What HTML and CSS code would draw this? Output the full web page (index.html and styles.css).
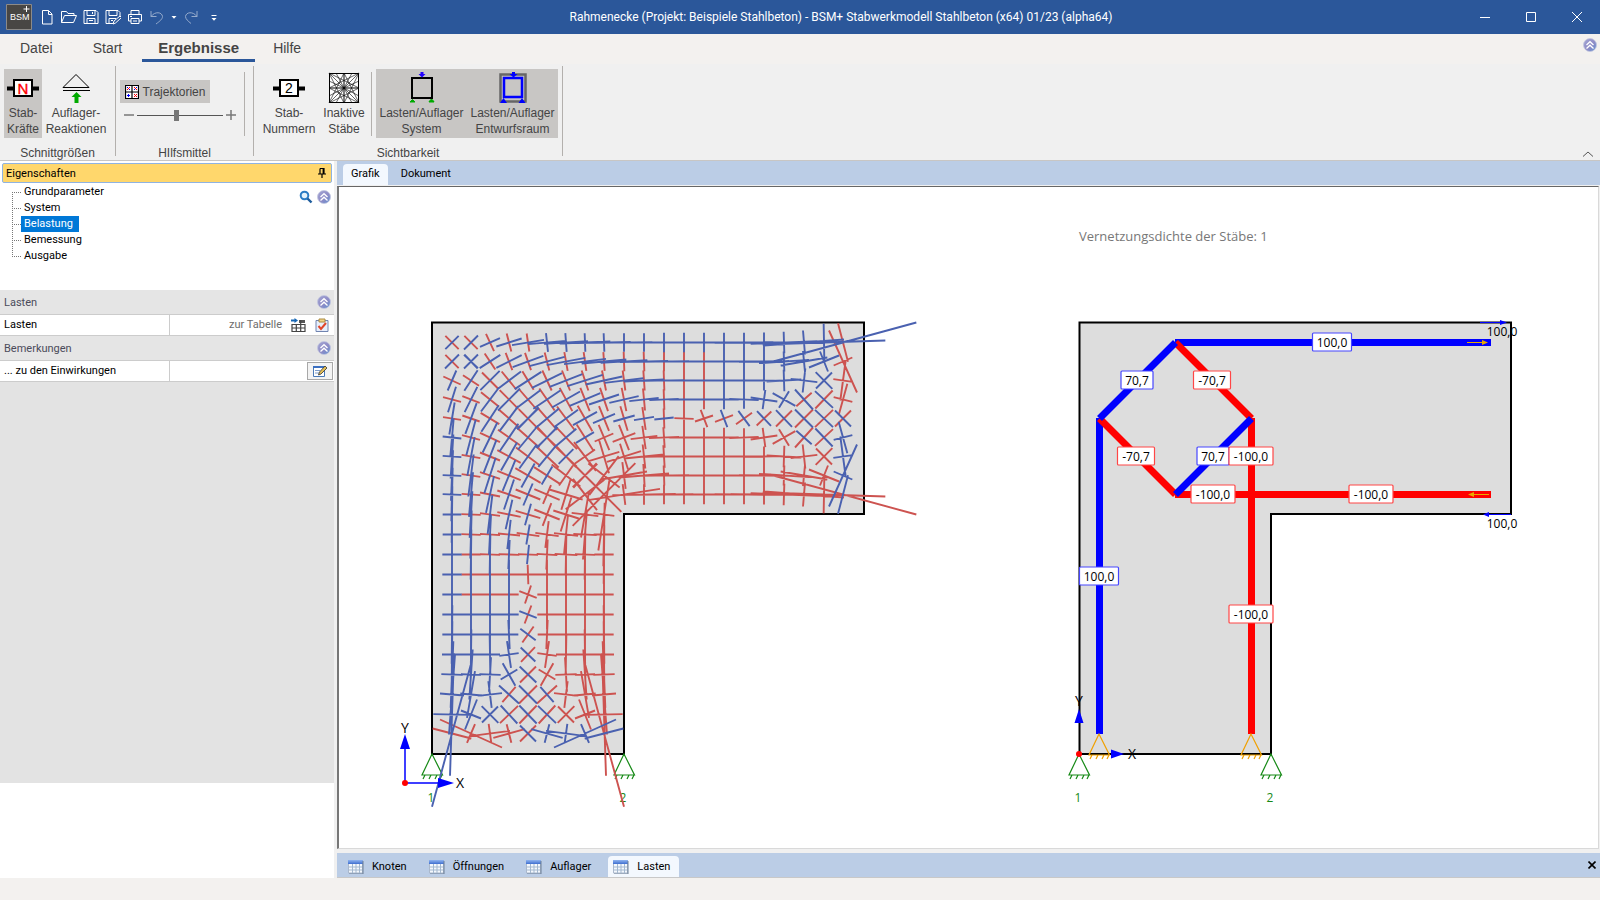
FILE: index.html
```html
<!DOCTYPE html>
<html lang="de">
<head>
<meta charset="utf-8">
<title>Rahmenecke - BSM+ Stabwerkmodell Stahlbeton</title>
<link rel="stylesheet" href="styles.css">
</head>
<body>
<svg class="defs" aria-hidden="true">
  <defs>
    <linearGradient id="orb" x1="0" y1="0" x2="1" y2="1"><stop offset="0" stop-color="#a3a6d4"/><stop offset=".55" stop-color="#8f8cc6"/><stop offset="1" stop-color="#5f8fd0"/></linearGradient>
    <linearGradient id="gridhead" x1="0" y1="0" x2="0" y2="1"><stop offset="0" stop-color="#8fb4f0"/><stop offset="1" stop-color="#3f6fd0"/></linearGradient>
    <symbol id="collapse" viewBox="0 0 14 14"><circle cx="7" cy="7" r="6.500" fill="url(#orb)" stroke="#c3c6e0" stroke-width=".8"/><path d="M3.500 7 7 3.700 10.500 7M3.500 10.500 7 7.200 10.500 10.500" fill="none" stroke="#fff" stroke-width="1.300"/></symbol>
    <symbol id="tableicon" viewBox="0 0 16 14"><path d="M.5.5h14v12.500h-14z" fill="#f4f8fd" stroke="#aab8cc"/><path d="M0 0h15v4H0z" fill="url(#gridhead)"/><path d="M1 7h13M1 10h13M4.500 4v9M8 4v9M11.500 4v9" stroke="#a3b8cf"/><path d="M15 1v13H1" fill="none" stroke="#6f8096"/></symbol>
    <g id="support"><path d="M0 0-10 21H10.500Z M-9 25l2-4M-3 25l2-4M3 25l2-4M8 25l2-4" fill="none" stroke="currentColor" stroke-width="1.200"/></g>
  </defs>
</svg>

<header class="titlebar">
  <svg class="logo" viewBox="0 0 26 26"><path d="M.5.5h25v25H.5z" fill="#484644" stroke="#8c8a88"/><text x="4" y="16" font-size="9" fill="#fff">BSM</text><path d="M20.500 2v6M17.500 5h6" stroke="#fff"/></svg>
  <nav class="quick" aria-label="Schnellzugriff">
    <button aria-label="Neu"><svg viewBox="0 0 16 16"><path d="M3.500 1.500h6l3.500 3.500v10h-9.500zM9.500 1.500v4h3.500"/></svg></button>
    <button aria-label="Öffnen"><svg viewBox="0 0 16 16"><path d="M.5 13.500v-11h5l1.500 2h6v2M.5 13.500l3-7h12l-3 7z"/></svg></button>
    <button aria-label="Speichern"><svg viewBox="0 0 16 16"><path d="M1 1.500h12l2 2v11H1zM4 1.500v5h8v-5M4 14.500v-5h8v5M6 11.500h4M9.500 3v2"/></svg></button>
    <button aria-label="Speichern unter"><svg viewBox="0 0 16 16"><path d="M8 14.500H1v-13h12l2 2v4M4 1.500v5h8v-5M4 14.500v-5h7M6 11.500h2M8 15l1-3 6-5 1.500 1.500-6 5.500z"/></svg></button>
    <button aria-label="Drucken"><svg viewBox="0 0 16 16"><path d="M4 5.500v-4h8v4M4 12H1.500V5.500h13V12H12M4 9.500h8v5H4zM6 12h4M3 7.500h2"/></svg></button>
    <button class="dim" aria-label="Rückgängig"><svg viewBox="0 0 16 16"><path d="M2 2v5.500h5.500M2 7.500C6 2 13 3 13.500 7.500 13.500 10 11 12 7 15"/></svg></button>
    <button class="drop" aria-label="Liste"><svg viewBox="0 0 6 16"><path d="M.5 7h5L3 9.800z" class="solid"/></svg></button>
    <button class="dim" aria-label="Wiederholen"><svg viewBox="0 0 16 16"><path d="M14 2v5.500H8.500M14 7.500C10 2 3 3 2.500 7.500 2.500 10 5 12 8 14.500"/></svg></button>
    <button class="last" aria-label="Anpassen"><svg viewBox="0 0 6 16"><path d="M.5 6.500h5" /><path d="M.5 9h5L3 11.800z" class="solid"/></svg></button>
  </nav>
  <h1>Rahmenecke (Projekt: Beispiele Stahlbeton) - BSM+ Stabwerkmodell Stahlbeton (x64) 01/23 (alpha64)</h1>
  <div class="window">
    <button aria-label="Minimieren"><svg viewBox="0 0 12 12"><path d="M1 6.500h10"/></svg></button>
    <button aria-label="Maximieren"><svg viewBox="0 0 12 12"><path d="M1.500 1.500h9v9h-9z"/></svg></button>
    <button aria-label="Schließen"><svg viewBox="0 0 12 12"><path d="m1 1 10 10M11 1 1 11"/></svg></button>
  </div>
</header>

<nav class="menu">
  <a href="#datei">Datei</a><a href="#start">Start</a><a href="#ergebnisse" class="active">Ergebnisse</a><a href="#hilfe">Hilfe</a>
  <button class="orb" aria-label="Hilfe einklappen"><svg><use href="#collapse"/></svg></button>
</nav>

<section class="ribbon">
  <div class="group forces">
    <div class="tools">
      <button class="tool on narrow"><svg viewBox="0 0 32 32"><path d="M0 17.500h32" stroke="#000" stroke-width="4"/><path d="M7 9h18v16H7z" fill="#fff" stroke="#000" stroke-width="2"/><text x="16" y="22.500" text-anchor="middle" font-size="15" fill="red" stroke="red" stroke-width=".4">N</text></svg>Stab-<br>Kräfte</button>
      <button class="tool reactions"><svg viewBox="0 0 32 32"><path d="M16 3.500 3 16.500h26zM3 19.500h27" fill="none" stroke="#000"/><path d="m16.500 21 5 5h-3v6h-4v-6h-3z" fill="#0a0"/></svg>Auflager-<br>Reaktionen</button>
    </div>
    <h2>Schnittgrößen</h2>
  </div>
  <div class="group aids">
    <div class="tools">
      <div class="stack">
        <button class="flat"><svg viewBox="0 0 14 14"><path d="M.5.5h13v13H.5zM7 0v14M0 7h14" fill="#fff" stroke="#000" stroke-width="1.200"/><path d="m2 2 3 3m4 0 3-3M2 10.500h3M3.500 9v3" stroke="#00f"/><path d="m5 2-3 3m7-3 3 3m-3 4 3 3m0-3-3 3" stroke="red"/></svg>Trajektorien</button>
        <label class="slider"><svg viewBox="0 0 10 10"><path d="M0 5h10"/></svg><input type="range" value="46" aria-label="Länge der Trajektorien"><svg viewBox="0 0 10 10"><path d="M0 5h10M5 0v10"/></svg></label>
      </div>
      <span class="rule"></span>
    </div>
    <h2>HIlfsmittel</h2>
  </div>
  <div class="group visibility">
    <div class="tools">
      <button class="tool numbers"><svg viewBox="0 0 32 32"><path d="M0 17.500h32" stroke="#000" stroke-width="4"/><path d="M7 9h18v16H7z" fill="#fff" stroke="#000" stroke-width="2"/><text x="16" y="22" text-anchor="middle" font-size="14" fill="#000">2</text></svg>Stab-<br>Nummern</button>
      <button class="tool inactive"><svg viewBox="0 0 32 32"><path d="M1.500 2.500h29v29h-29zM16 2v30M1 17h30" fill="#fff" stroke="#000"/><path d="m1 2 30 30M31 2 1 32M1 2l15 30L31 2M1 32 16 2l15 30M1 2l30 15L1 32M31 2 1 17l30 15M1 10l15 7-8 15M24 2l-8 15 15 8M8 2l8 15-15 8M31 10l-15 7 8 15" fill="none" stroke="#000" stroke-width=".6"/></svg>Inaktive<br>Stäbe</button>
      <span class="rule"></span>
      <button class="tool on wide"><svg viewBox="0 0 32 32"><path d="M6 7h20v20H6z" fill="none" stroke="#000" stroke-width="2"/><path d="m16 6.500-3.500-3.500h2V1h3v2h2z" fill="#20f"/><path d="M6.500 28.500 4 31h5zM25.500 28l-2.500 2.500h5zM23 32h5" fill="#0a0" stroke="#0a0"/></svg>Lasten/Auflager<br>System</button>
      <button class="tool on wide"><svg viewBox="0 0 32 32"><path d="M3.500 3.500h25v27h-25z" fill="none" stroke="#666" stroke-width="2.500"/><path d="M7 7h18v19H7z" fill="none" stroke="#00f" stroke-width="2.500"/><path d="m16.500 6.500-4-3.500h2.500V1h3v2h2.500zM6.500 27l-3.500 5h7zM25 27l-3.500 5h7z" fill="#00f"/></svg>Lasten/Auflager<br>Entwurfsraum</button>
    </div>
    <h2>Sichtbarkeit</h2>
  </div>
  <button class="fold" aria-label="Menüband einklappen"><svg viewBox="0 0 12 6"><path d="m1 5.500 5-4.500 5 4.500"/></svg></button>
</section>

<main class="work">
  <aside class="props">
    <h2 class="caption">Eigenschaften<button aria-label="Anheften"><svg viewBox="0 0 8 10"><path d="M2 .5h4V6M2 .5V6M5.200 0v6M0 6h8M4 6v4" stroke="#000" stroke-width="1.200" fill="none"/></svg></button></h2>
    <div class="treebox">
      <ul class="tree">
        <li><a href="#grund">Grundparameter</a></li>
        <li><a href="#system">System</a></li>
        <li><a href="#belastung" class="picked">Belastung</a></li>
        <li><a href="#bemessung">Bemessung</a></li>
        <li><a href="#ausgabe">Ausgabe</a></li>
      </ul>
      <div class="treetools">
        <button aria-label="Suchen"><svg viewBox="0 0 14 14"><circle cx="5.500" cy="5.500" r="3.800" fill="#e4f2fb" stroke="#2b7cc4" stroke-width="2"/><path d="m8.500 8.500 4 4" stroke="#1e5c9c" stroke-width="2.400"/></svg></button>
        <button aria-label="Einklappen"><svg><use href="#collapse"/></svg></button>
      </div>
    </div>
    <h3>Lasten<button aria-label="Einklappen"><svg><use href="#collapse"/></svg></button></h3>
    <div class="row"><span>Lasten</span><div>
      <a href="#tabelle">zur Tabelle</a>
      <button class="tbl" aria-label="Tabelle"><svg viewBox="0 0 15 15"><path d="M0 2.500h5" stroke="#1666b4" stroke-width="2"/><path d="m3.500 0 3.500 2.500-3.500 2.500z" fill="#1666b4"/><path d="M8 2h6v3H8z" fill="#555"/><path d="M1 6.500h13v7H1zM1 10h13M5.300 6v8M9.700 2v12" fill="none" stroke="#444" stroke-width="1.200"/></svg></button>
      <button class="clip" aria-label="Prüfen"><svg viewBox="0 0 14 14"><path d="M1 2.500h12v11H1z" fill="#e6eefc" stroke="#7084b0"/><path d="M4 1h6v3H4z" fill="#f3d487" stroke="#a98a42"/><path d="m3.500 8 2.500 3 5-6" fill="none" stroke="#e0452c" stroke-width="2"/></svg></button>
    </div></div>
    <h3>Bemerkungen<button aria-label="Einklappen"><svg><use href="#collapse"/></svg></button></h3>
    <div class="row"><span>... zu den Einwirkungen</span><div>
      <button class="edit" aria-label="Bearbeiten"><svg viewBox="0 0 15 13"><path d="M.5 1.500h11v10H.5z" fill="#fff" stroke="#4a7ab8"/><path d="M0 1h12v2H0z" fill="#3b6fc0"/><path d="M2 5.500h5M2 8h4" stroke="#7d9cc8"/><path d="m5.500 10 1-3 5.500-6 2 2-6 6z" fill="#e2bd55" stroke="#333" stroke-width=".8"/></svg></button>
    </div></div>
    <div class="filler"></div>
  </aside>

  <section class="view">
    <nav class="tabs"><a href="#grafik" class="current">Grafik</a><a href="#dokument">Dokument</a></nav>
    <div class="canvas">
      <svg viewBox="339 187 1259 661" class="drawing">
        <path class="body" d="M432 322.500h432v191.500H624v240H432z"/>
        <use href="#support" x="432" y="754" class="green"/>
        <use href="#support" x="624" y="754" class="green"/>
        <text x="431" y="802" class="green mid">1</text><text x="623" y="802" class="green mid">2</text>
        <g id="field"></g>
        <path class="axis" d="M405 783V748M405 783h35"/>
        <path fill="#00f" d="m405 734 5 15h-10zM454 783l-16-5v10z"/>
        <circle cx="405" cy="783" r="3" fill="red"/>
        <text x="460" y="788" class="mid letter">X</text><text x="405" y="733" class="mid letter">Y</text>

        <text x="1079" y="241" class="note">Vernetzungsdichte der Stäbe: 1</text>
        <path class="body" d="M1079.500 322.500H1511v191.500h-240v240h-191.500z"/>
        <path class="blue" d="M1175 342.500h316M1099.500 418v316"/>
        <path class="red" d="M1175 494.500h316M1251.500 418v316M1175.500 342.500l76 76M1099.500 418.500l76 76"/>
        <path class="blue" d="M1099.500 418.500l76-76M1175.500 494.500l76-76"/>
        <g id="values"></g>
        <path d="M1480 322.500h22M1511 514.500h-22" stroke="#00f"/><path fill="#00f" d="m1507 322.500-7-2.500v5zM1483 514.500l6-2.500v5z"/>
        <path d="M1467 342.500h16M1489 494.500h-16" stroke="#e8a900"/><path fill="#e8a900" d="m1488 342.500-6-2.500v5zM1468 494.500l6-2.500v5z"/>
        <text x="1502" y="336" class="mid">100,0</text><text x="1502" y="528" class="mid">100,0</text>
        <use href="#support" x="1079" y="754" class="green"/><use href="#support" x="1271" y="754" class="green"/>
        <use href="#support" x="1099" y="734" class="orange"/><use href="#support" x="1251" y="734" class="orange"/>
        <path fill="#00f" d="m1079 709 4.500 14h-9zM1124 754l-13-4.500v9z"/><circle cx="1079" cy="754" r="3" fill="red"/>
        <text x="1132" y="759" class="mid letter">X</text><text x="1079" y="706" class="mid letter">Y</text>
        <text x="1078" y="802" class="green mid">1</text><text x="1270" y="802" class="green mid">2</text>
      </svg>
    </div>
    <nav class="sheets">
      <a href="#knoten"><svg><use href="#tableicon"/></svg>Knoten</a>
      <a href="#oeffnungen"><svg><use href="#tableicon"/></svg>Öffnungen</a>
      <a href="#auflager"><svg><use href="#tableicon"/></svg>Auflager</a>
      <a href="#lasten" class="current"><svg><use href="#tableicon"/></svg>Lasten</a>
      <button aria-label="Schließen"><svg viewBox="0 0 8 8"><path d="m.5.5 7 7M7.500.5l-7 7" stroke="#000" stroke-width="1.600"/></svg></button>
    </nav>
  </section>
</main>
<footer class="status"></footer>
<script src="field.js"></script>
</body>
</html>
```
FILE: field.js
```js
// Principal stress crosses of the upper arm. Each entry: column, then two
// strokes (colour, half extent in thirds of a unit). The leg is its transpose.
const arm = {
  1: `1 r 20 20 b 20 -20;2 r 20 20 b 21 -21;3 b 30 -13 r 12 26;4 b 38 -12 r 7 27;5 b 48 -8 r 4 27;6 b 57 -5 b 3 28;7 b 66 -4 b 2 28;8 b 76 -3 b 1 28;9 b 80 -2 b 1 28;10 b 85 -1 b 0 28;11 b 88 0 b 0 28;12 b 88 0 b 0 29;13 b 88 0 b 0 29;14 b 88 0 b 0 29;15 b 88 0 b 0 29;16 b 88 -1 b 0 29;17 b 100 -1 b 0 30;18 b 100 -4 b 1 32;19 b 120 -9 b 3 36;20 b 184 -6 b 1 56;21 b 220 -60 r 15 58`,
  2: `2 b 21 20 b 21 -21;3 b 31 -20 r 16 24;4 b 38 -19 r 10 26;5 b 46 -17 r 9 26;6 b 53 -14 r 7 27;7 b 58 -11 r 5 28;8 b 63 -8 r 4 28;9 b 67 -6 r 2 28;10 b 70 -4 r 1 29;11 b 72 -2 r 1 29;12 b 75 -1 r 0 29;13 b 75 0 r 0 29;14 b 75 0 r 0 29;15 b 75 0 b 0 29;16 b 75 0 b 0 29;17 b 75 -1 b 0 30;18 b 75 -5 b 1 30;19 b 70 -12 b 3 32;20 b 45 -18 b 12 30;21 r 28 -12 r 42 93`,
  3: `3 r 24 24 b 29 -29;4 b 36 -27 r 22 27;5 b 40 -26 r 17 28;6 b 45 -22 r 14 30;7 b 49 -19 r 12 30;8 b 53 -17 r 10 30;9 b 55 -12 r 6 30;10 b 58 -7 r 4 30;11 b 60 -3 r 2 30;12 b 60 -1 r 1 30;13 b 60 0 r 0 30;14 b 60 0 r 0 30;15 b 60 0 b 0 29;16 b 60 0 b 0 29;17 b 60 1 b 0 30;18 b 52 -3 b 1 32;19 b 40 5 b -4 36;20 b 25 25 b -24 24;21 r 29 4 r 8 -60`,
  4: `4 b 33 -33 r 28 28;5 b 37 -28 r 26 30;6 b 41 -28 r 23 33;7 b 42 -24 r 19 35;8 b 46 -19 r 14 35;9 b 45 -15 r 12 35;10 b 44 -10 r 7 35;11 b 44 -5 r 3 33;12 b 44 -2 r 1 31;13 b 44 0 r 0 30;14 b 44 0 r 0 29;15 b 44 0 b 0 29;16 b 44 2 b 0 28;17 b 40 6 b -4 29;18 b 34 19 b 15 -25;19 b 27 30 r 23 -20;20 b 27 25 r 26 -27;21 r 28 7 r 13 -47`,
  5: `5 b 33 -32 r 28 28;6 b 36 -30 r 30 34;7 b 36 -26 r 27 36;8 b 36 -20 r 22 38;9 b 33 -14 r 15 37;10 b 32 -9 r 11 37;11 b 30 -5 r 5 34;12 b 29 -3 r 1 30;13 r 29 1 r 0 29;14 r 10 26 r 27 -9;15 b 10 26 r 27 -10;16 b 17 23 r 24 -17;17 b 21 22 r 22 -21;18 b 24 25 r 24 -24;19 b 27 27 r 27 -27;20 b 27 26 r 27 -26;21 b 24 24 r 24 -24`,
  6: `6 b 32 -31 r 30 28;7 b 31 -26 r 33 35;8 b 27 -16 r 25 39;9 r 28 -12 r 16 38;10 r 34 -13 r 15 38;11 r 40 -5 r 5 35;12 r 45 -2 r 2 31;13 r 44 0 r 0 29;14 r 44 0 r 0 29`,
  7: `7 b 22 -22 r 32 30;8 r 30 -21 r 33 43;9 r 46 -14 r 15 50;10 r 51 -16 r 12 38;11 r 60 -6 r 4 36;12 r 60 -1 r 2 34;13 r 60 0 r 0 30;14 r 60 0 r 0 29`,
  8: `8 r 45 45 r 37 -35;9 r 47 36 r 44 -58;10 r 69 -12 r 5 40;11 r 75 -6 r 2 35;12 r 75 -1 r 1 30;13 r 75 0 r 0 29;14 r 75 0 r 0 29`,
  9: `9 r 52 52 r 94 -94;10 r 108 -17 r 4 31;11 r 95 -2 r 0 31;12 r 88 -1 r 0 29;13 r 88 0 r 0 29;14 r 88 0 r 0 29`
};
const swap = { r: "b", b: "r" };
const offset = n => n <= 9 ? 20 + 19 * (n - 1) : Math.min(192 + 20 * (n - 10), 411);
const paths = { r: "", b: "" };

function stroke(colour, col, row, dx, dy) {
  const px = offset(col), py = offset(row);
  const ex = dx / 3, ey = dy / 3;
  paths[colour] += `M${px - ex} ${py - ey}L${px + ex} ${py + ey}`;
  paths[colour] += `M${py - ey} ${px - ex}L${py + ey} ${px + ex}`;
}

for (const row in arm) {
  for (const entry of arm[row].split(";")) {
    const v = entry.split(" ");
    const col = +v[0];
    for (const k of [1, 4]) {
      stroke(v[k], col, +row, +v[k + 1], +v[k + 2]);
      // Beyond column 14 the lower half repeats the upper with opposite sign.
      if (col >= 15 && row < 5) stroke(swap[v[k]], col, 10 - row, +v[k + 1], -v[k + 2]);
    }
  }
}
document.getElementById("field").innerHTML =
  `<g transform="translate(432 322.5)"><path class="tension" d="${paths.r}"/><path class="pressure" d="${paths.b}"/></g>`;

const values = [
  [1332, 342, "100,0"], [1212, 380, "-70,7"], [1137, 380, "70,7"], [1136, 456, "-70,7"],
  [1213, 456, "70,7"], [1251, 456, "-100,0"], [1213, 494, "-100,0"], [1371, 494, "-100,0"],
  [1099, 576, "100,0"], [1251, 614, "-100,0"]
];
const widths = { "100,0": 39, "-70,7": 37, "70,7": 32, "-100,0": 44 };
document.getElementById("values").innerHTML = values.map(([x, y, t]) => {
  const w = widths[t];
  return `<rect x="${x - w / 2}" y="${y - 9}" width="${w}" height="18" rx="1" fill="#fff" stroke="${t[0] === "-" ? "#ff4646" : "#4646ff"}" stroke-width="1.2"/>` +
    `<text class="mid" x="${x}" y="${y + 5}">${t}</text>`;
}).join("");
```
FILE: styles.css
```css
* { box-sizing: border-box; }
html, body { height: 100%; }
body { margin: 0; display: flex; flex-direction: column; background: #f0f0f0; font: 12px "Liberation Sans", Arial, sans-serif; color: #444; overflow: hidden; }
button { border: 0; padding: 0; background: none; font: inherit; color: inherit; display: flex; align-items: center; justify-content: center; }
a { color: inherit; text-decoration: none; }
h1, h2, h3, ul { margin: 0; padding: 0; font-weight: normal; font-size: inherit; }
.defs { position: absolute; width: 0; height: 0; }

.titlebar { height: 34px; flex: none; display: flex; align-items: center; background: #2b579a; color: #fff; padding-left: 6px; }
.titlebar svg { fill: none; stroke: #fff; }
.logo { width: 26px; height: 26px; margin-right: 4px; }
.logo text { stroke: none; font-family: "Liberation Sans", sans-serif; }
.quick { display: flex; width: 190px; }
.quick button { width: 22px; height: 22px; }
.quick svg { width: 16px; height: 16px; }
.quick .dim { opacity: .5; }
.quick .drop, .quick .last { width: 12px; }
.quick .last { margin-left: 6px; }
.quick .drop svg, .quick .last svg { width: 6px; }
.quick .solid { fill: #fff; stroke: none; }
.titlebar h1 { flex: 1; text-align: center; font: 12px Roboto, sans-serif; padding-right: 6px; }
.window { display: flex; }
.window button { width: 46px; height: 34px; }
.window svg { width: 12px; height: 12px; }

.menu { height: 30px; flex: none; display: flex; background: #f3f1ef; padding-left: 8px; font-size: 14px; }
.menu a { padding: 5px 12px 0; margin-right: 16px; height: 28px; line-height: 18px; }
.menu .active { font-weight: bold; font-size: 15px; padding: 5px 16px 0; margin: 0 6px 0 -8px; border-bottom: 3px solid #2b579a; }
.menu .orb { margin: 4px 3px 0 auto; align-self: flex-start; }
.orb svg, .treetools svg, .props h3 svg { width: 14px; height: 14px; }

.ribbon { height: 97px; flex: none; display: flex; border-bottom: 1px solid #c8c6c4; padding-top: 2px; }
.group { display: flex; flex-direction: column; height: 90px; border-right: 1px solid #b3b0ad; padding-top: 3px; }
.group h2 { text-align: center; line-height: 14px; margin-top: 8px; }
.forces { width: 116px; }
.aids { width: 138px; }
.visibility { width: 309px; }
.tools { display: flex; flex: none; height: 69px; padding-left: 4px; }
.visibility .tools { padding-left: 3px; }
.tool { flex-direction: column; justify-content: flex-start; line-height: 16px; padding-top: 2px; text-align: center; }
.tool svg { width: 32px; height: 32px; margin-bottom: 2px; flex: none; }
.tool text { font-family: "Liberation Sans", sans-serif; }
.on, .flat { background: #c8c6c4; }
.narrow { width: 38px; }
.reactions { width: 68px; }
.numbers { width: 64px; }
.inactive { width: 46px; }
.wide { width: 91px; }
.rule { width: 1px; background: #b3b0ad; margin: 3px 4px 2px; }
.stack { width: 116px; padding-top: 11px; margin-right: 4px; }
.flat { width: 90px; height: 23px; gap: 4px; }
.flat svg { width: 14px; height: 14px; }
.slider { display: flex; align-items: center; gap: 3px; height: 24px; padding-left: 4px; }
.slider svg { width: 10px; height: 10px; flex: none; stroke: #777; stroke-width: 1.500; }
.slider input { appearance: none; width: 86px; height: 12px; margin: 0; background: linear-gradient(#555, #555) center / 100% 1px no-repeat; }
.slider input::-webkit-slider-thumb { appearance: none; width: 5px; height: 11px; background: #777; }
.fold { margin: auto 6px 3px auto; }
.fold svg { width: 12px; height: 6px; fill: none; stroke: #555; }

.work { flex: 1; min-height: 0; display: flex; gap: 3px; font: 11px Roboto, sans-serif; color: #000; }
.props { width: 334px; display: flex; flex-direction: column; background: #fff; }
.caption { display: flex; justify-content: space-between; align-items: center; height: 20px; margin: 2px 2px 1px; padding: 0 5px 0 3px; border: 1px solid #8fb3e2; border-radius: 2px; background: #ffd76c; }
.caption svg { width: 8px; height: 10px; }
.treebox { display: flex; justify-content: space-between; height: 106px; padding: 0 3px 0 12px; }
.tree { list-style: none; height: 80px; background: repeating-linear-gradient(#777 0 1px, #fff 1px 2px) 0 8px / 1px 64px no-repeat; }
.tree li { display: flex; align-items: center; height: 16px; line-height: 16px; }
.tree li::before { content: ""; width: 9px; border-top: 1px dotted #777; }
.tree a { padding: 0 6px 0 3px; }
.picked { background: #0078d7; color: #fff; }
.treetools { display: flex; gap: 4px; align-items: flex-start; padding-top: 6px; }
.props h3 { display: flex; align-items: center; justify-content: space-between; height: 25px; padding: 0 3px 0 4px; background: #e5e5e5; color: #4b4b5a; border-bottom: 1px solid #ccc; }
.row { display: grid; grid-template-columns: 170px 1fr; height: 21px; line-height: 20px; border-bottom: 1px solid #ccc; }
.row span { padding-left: 4px; border-right: 1px solid #ccc; }
.row div { display: flex; justify-content: flex-end; align-items: center; color: #6d6d6d; }
.tbl { margin: 0 9px; }
.tbl svg { width: 15px; height: 15px; }
.clip { margin-right: 5px; }
.clip svg { width: 14px; height: 14px; }
.edit { width: 26px; height: 18px; border: 1px solid #a8a8a8; background: #f3f3f3; margin-right: 1px; }
.edit svg { width: 15px; height: 13px; }
.filler { flex: 1; background: #e3e3e3; margin-bottom: 95px; }

.view { flex: 1; min-width: 0; display: flex; flex-direction: column; }
.tabs { display: flex; height: 24px; padding: 3px 6px 0; background: #bbcde6; }
.tabs a { padding: 0 8px; line-height: 20px; margin-right: 5px; }
.current { background: #f3f8fe; border-radius: 4px 4px 0 0; }
.canvas { flex: 1; min-height: 0; margin-top: 1px; background: #fff; border: 1px solid #d9d9d9; border-left: 2px solid #777; border-top: 1px solid #666; margin-right: 1px; }
.drawing { display: block; width: 100%; height: 100%; font: 12px "Open Sans", sans-serif; fill: #000; }
.body { fill: #ddd; stroke: #000; stroke-width: 2; }
.tension, .pressure { fill: none; stroke-width: 1.900; }
.tension { stroke: #cd5350; }
.pressure { stroke: #4a61b0; }
.axis { fill: none; stroke: #00f; stroke-width: 1.500; }
.blue, .red { fill: none; stroke: #00f; stroke-width: 7; }
.red { stroke: red; }
.mid { text-anchor: middle; }
.letter { font-size: 14px; }
.note { fill: #777; font-size: 13px; }
.green { color: #178a17; }
text.green { fill: #178a17; }
.orange { color: #f0a000; }
.sheets { display: flex; height: 25px; margin-top: 4px; padding: 3px 4px 0 6px; background: #bbcde6; border-bottom: 1px solid #c8c8c8; }
.sheets a { display: flex; align-items: center; gap: 8px; padding: 0 9px 0 5px; margin-right: 8px; }
.sheets a svg { width: 16px; height: 14px; }
.sheets button { margin: 0 0 3px auto; }
.sheets button svg { width: 8px; height: 8px; }
.status { height: 22px; flex: none; background: #f3f1ef; }
```
